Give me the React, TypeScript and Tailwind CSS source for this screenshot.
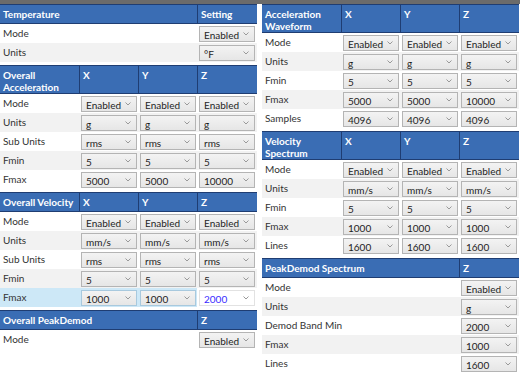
import React from "react";

type Row = { label: string; values: string[]; active?: boolean };
type SectionProps = {
  title: React.ReactNode;
  cols: string[];
  rows: Row[];
  tall?: boolean;
};

const Chevron = () => (
  <svg width="6" height="4" viewBox="0 0 6 4" className="shrink-0">
    <path d="M0.5 0.5 L3 3 L5.5 0.5" fill="none" stroke="#999" strokeWidth="1" />
  </svg>
);

const Select = ({ value, active, focused }: { value: string; active?: boolean; focused?: boolean }) => (
  <div
    className={
      focused
        ? "flex h-[16px] w-[56px] items-center justify-between border border-[#e2e2e2] bg-white pl-[4px] pr-[5px] text-[10px] text-[#3a2cff]"
        : active
        ? "flex h-[16px] w-[56px] items-center justify-between border border-[#a8c9de] bg-gradient-to-b from-[#f3f3f3] to-[#e6e6e6] pl-[4px] pr-[5px] text-[10px] text-[#1e1e1e]"
        : "flex h-[16px] w-[56px] items-center justify-between border border-[#b4b4b4] bg-gradient-to-b from-[#f3f3f3] to-[#e6e6e6] pl-[4px] pr-[5px] text-[10px] text-[#1e1e1e]"
    }
  >
    <span className="pt-[1px] leading-none">{value}</span>
    <Chevron />
  </div>
);

const Section = ({ title, cols, rows, tall }: SectionProps) => {
  const labelW = cols.length === 1 ? "w-[197px]" : "w-[79px]";
  return (
    <div className="mt-[3px] first:mt-0">
      <div
        className={`flex border-y border-[#1f3d72] bg-[#3a6db4] text-[10px] font-bold leading-[12px] text-white ${
          tall ? "h-[29px]" : "h-[20px]"
        }`}
      >
        <div className={`${labelW} shrink-0 whitespace-nowrap px-[3px] pt-[3px]`}>{title}</div>
        {cols.map((c, i) => (
          <div
            key={c}
            className={`${i === cols.length - 1 ? "w-[60px]" : "w-[59px]"} shrink-0 border-l border-[#1f3d72] px-[3px] pt-[3px]`}
          >
            {c}
          </div>
        ))}
      </div>
      {rows.map((r, ri) => (
        <div
          key={r.label}
          className={`flex h-[19px] items-center ${ri % 2 === 1 ? "bg-[#f2f2f2]" : "bg-white"}`}
        >
          <div
            className={`${labelW} flex h-full shrink-0 items-center pb-[1px] pl-[3px] text-[10px] text-[#333] ${
              r.active ? "bg-[#cde8f7]" : ""
            }`}
          >
            {r.label}
          </div>
          {r.values.map((v, i) => {
            const last = i === r.values.length - 1;
            const focused = r.active && last;
            return (
              <div
                key={i}
                className={`${last ? "w-[60px]" : "w-[59px]"} flex h-full shrink-0 items-center pl-[2px] pt-[1px] ${
                  r.active && !last ? "bg-[#cde8f7]" : ""
                } ${focused ? "bg-white" : ""}`}
              >
                <Select value={v} active={r.active && !last} focused={focused} />
              </div>
            );
          })}
        </div>
      ))}
    </div>
  );
};

const xyz = ["X", "Y", "Z"];

export default function App() {
  return (
    <div
      className="h-[388px] w-[520px] overflow-hidden bg-white"
      style={{ fontFamily: "Lato, 'Open Sans', sans-serif" }}
    >
      <div className="h-[4px] bg-[#6b6b6b]" />
      <div className="flex gap-[5px]">
        {/* left column */}
        <div className="w-[257px]">
          <Section
            title="Temperature"
            cols={["Setting"]}
            rows={[
              { label: "Mode", values: ["Enabled"] },
              { label: "Units", values: ["°F"] },
            ]}
          />
          <Section
            tall
            title={
              <>
                Overall
                <br />
                Acceleration
              </>
            }
            cols={xyz}
            rows={[
              { label: "Mode", values: ["Enabled", "Enabled", "Enabled"] },
              { label: "Units", values: ["g", "g", "g"] },
              { label: "Sub Units", values: ["rms", "rms", "rms"] },
              { label: "Fmin", values: ["5", "5", "5"] },
              { label: "Fmax", values: ["5000", "5000", "10000"] },
            ]}
          />
          <Section
            title="Overall Velocity"
            cols={xyz}
            rows={[
              { label: "Mode", values: ["Enabled", "Enabled", "Enabled"] },
              { label: "Units", values: ["mm/s", "mm/s", "mm/s"] },
              { label: "Sub Units", values: ["rms", "rms", "rms"] },
              { label: "Fmin", values: ["5", "5", "5"] },
              { label: "Fmax", values: ["1000", "1000", "2000"], active: true },
            ]}
          />
          <Section
            title="Overall PeakDemod"
            cols={["Z"]}
            rows={[{ label: "Mode", values: ["Enabled"] }]}
          />
        </div>

        {/* right column */}
        <div className="w-[257px]">
          <Section
            tall
            title={
              <>
                Acceleration
                <br />
                Waveform
              </>
            }
            cols={xyz}
            rows={[
              { label: "Mode", values: ["Enabled", "Enabled", "Enabled"] },
              { label: "Units", values: ["g", "g", "g"] },
              { label: "Fmin", values: ["5", "5", "5"] },
              { label: "Fmax", values: ["5000", "5000", "10000"] },
              { label: "Samples", values: ["4096", "4096", "4096"] },
            ]}
          />
          <Section
            tall
            title={
              <>
                Velocity
                <br />
                Spectrum
              </>
            }
            cols={xyz}
            rows={[
              { label: "Mode", values: ["Enabled", "Enabled", "Enabled"] },
              { label: "Units", values: ["mm/s", "mm/s", "mm/s"] },
              { label: "Fmin", values: ["5", "5", "5"] },
              { label: "Fmax", values: ["1000", "1000", "1000"] },
              { label: "Lines", values: ["1600", "1600", "1600"] },
            ]}
          />
          <Section
            title="PeakDemod Spectrum"
            cols={["Z"]}
            rows={[
              { label: "Mode", values: ["Enabled"] },
              { label: "Units", values: ["g"] },
              { label: "Demod Band Min", values: ["2000"] },
              { label: "Fmax", values: ["1000"] },
              { label: "Lines", values: ["1600"] },
            ]}
          />
        </div>
      </div>
    </div>
  );
}
